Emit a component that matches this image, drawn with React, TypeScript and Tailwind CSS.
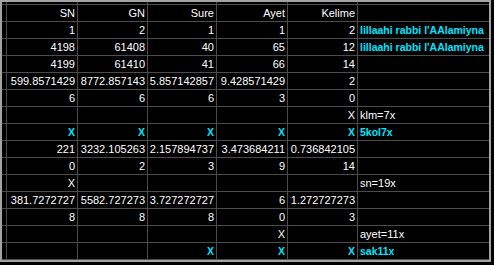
import React from "react";

type Cell = { t: string; c?: boolean };

const E: Cell = { t: "" };
const n = (t: string): Cell => ({ t });
const cx: Cell = { t: "X", c: true };

const rows: { cells: Cell[]; note: Cell }[] = [
  { cells: [n("SN"), n("GN"), n("Sure"), n("Ayet"), n("Kelime")], note: E },
  { cells: [n("1"), n("2"), n("1"), n("1"), n("2")], note: { t: "lillaahi rabbi l'AAlamiyna", c: true } },
  { cells: [n("4198"), n("61408"), n("40"), n("65"), n("12")], note: { t: "lillaahi rabbi l'AAlamiyna", c: true } },
  { cells: [n("4199"), n("61410"), n("41"), n("66"), n("14")], note: E },
  { cells: [n("599.8571429"), n("8772.857143"), n("5.857142857"), n("9.428571429"), n("2")], note: E },
  { cells: [n("6"), n("6"), n("6"), n("3"), n("0")], note: E },
  { cells: [E, E, E, E, n("X")], note: n("klm=7x") },
  { cells: [cx, cx, cx, cx, cx], note: { t: "5kol7x", c: true } },
  { cells: [n("221"), n("3232.105263"), n("2.157894737"), n("3.473684211"), n("0.736842105")], note: E },
  { cells: [n("0"), n("2"), n("3"), n("9"), n("14")], note: E },
  { cells: [n("X"), E, E, E, E], note: n("sn=19x") },
  { cells: [n("381.7272727"), n("5582.727273"), n("3.727272727"), n("6"), n("1.272727273")], note: E },
  { cells: [n("8"), n("8"), n("8"), n("0"), n("3")], note: E },
  { cells: [E, E, E, n("X"), E], note: n("ayet=11x") },
  { cells: [E, E, cx, cx, cx], note: { t: "sak11x", c: true } },
];

function Txt({ cell }: { cell: Cell }) {
  if (!cell.t) return null;
  return cell.c ? (
    <span className="font-bold text-[#00e5ff] text-[10.5px]">{cell.t}</span>
  ) : (
    <span className="text-white text-[11px]">{cell.t}</span>
  );
}

export default function App() {
  return (
    <div
      className="w-[494px] h-[265px] bg-black overflow-hidden"
      style={{ fontFamily: '"Liberation Sans", Arial, sans-serif' }}
    >
      <div className="w-[491px] border-2 border-[#a3a3a3] bg-[#4c4c4c] pb-px">
        <div className="grid grid-cols-[4px_70px_69px_68px_70px_69px_131px] grid-rows-[2px] auto-rows-[16px] gap-px">
          {Array.from({ length: 7 }).map((_, i) => (
            <div key={"h" + i} className="bg-black" />
          ))}
          {rows.map((r, ri) => (
            <React.Fragment key={ri}>
              <div className="bg-black" />
              {r.cells.map((c, ci) => (
                <div
                  key={ci}
                  className="bg-black flex items-center justify-end pr-[2px] leading-none whitespace-nowrap overflow-hidden"
                >
                  <Txt cell={c} />
                </div>
              ))}
              <div className="bg-black flex items-center pl-[2px] leading-none whitespace-nowrap overflow-hidden">
                <Txt cell={r.note} />
              </div>
            </React.Fragment>
          ))}
        </div>
      </div>
    </div>
  );
}
